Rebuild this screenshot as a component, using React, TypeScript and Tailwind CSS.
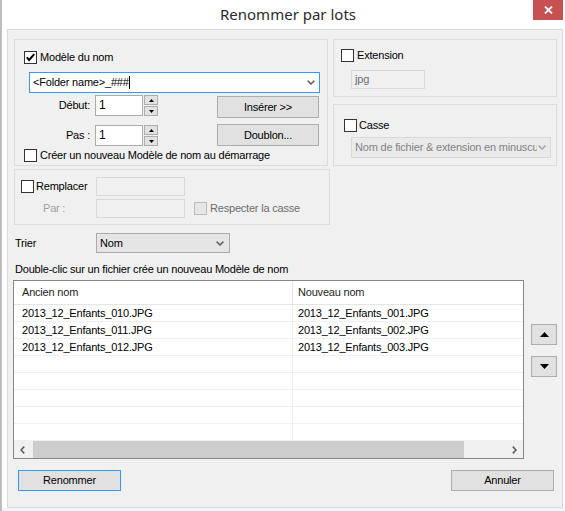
import React from 'react';

function Check({ checked = false, disabled = false }: { checked?: boolean; disabled?: boolean }) {
  return (
    <span
      className={
        disabled
          ? 'w-[13px] h-[13px] shrink-0 border border-[#bcbcbc] bg-[#e6e6e6]'
          : 'w-[13px] h-[13px] shrink-0 border border-[#333333] bg-white flex items-center justify-center'
      }
    >
      {checked && (
        <svg width="11" height="11" viewBox="0 0 11 11">
          <path d="M1.8 5.4 L4.2 8 L9.2 2.2" fill="none" stroke="#000" strokeWidth="2" />
        </svg>
      )}
    </span>
  );
}

function Chevron({ color = '#606060' }: { color?: string }) {
  return (
    <svg width="8" height="5" viewBox="0 0 8 5">
      <path d="M0.6 0.6 L4 4 L7.4 0.6" fill="none" stroke={color} strokeWidth="1.5" />
    </svg>
  );
}

function Spin() {
  return (
    <div className="flex flex-col gap-px ml-px">
      <div className="w-[14px] h-[10px] border border-[#adadad] bg-[#e1e1e1] flex items-center justify-center">
        <svg width="5" height="3" viewBox="0 0 5 3">
          <path d="M0 3 L2.5 0 L5 3 Z" fill="#000" />
        </svg>
      </div>
      <div className="w-[14px] h-[10px] border border-[#adadad] bg-[#e1e1e1] flex items-center justify-center">
        <svg width="5" height="3" viewBox="0 0 5 3">
          <path d="M0 0 L2.5 3 L5 0 Z" fill="#000" />
        </svg>
      </div>
    </div>
  );
}

const rows = [
  ['2013_12_Enfants_010.JPG', '2013_12_Enfants_001.JPG'],
  ['2013_12_Enfants_011.JPG', '2013_12_Enfants_002.JPG'],
  ['2013_12_Enfants_012.JPG', '2013_12_Enfants_003.JPG'],
  ['', ''],
  ['', ''],
  ['', ''],
  ['', ''],
  ['', ''],
];

export default function App() {
  return (
    <div className="relative w-[565px] h-[511px] bg-white border-l-2 border-[#bdbdbd] flex flex-col font-['Liberation_Sans',Arial,sans-serif] text-[11px] tracking-[-0.2px] text-black leading-[13px]">
      {/* title bar */}
      <div className="h-[29px] flex items-center justify-center pl-[9px] font-['Noto_Sans',sans-serif] text-[15px] tracking-normal text-[#2b2b2b]">
        Renommer par lots
      </div>
      <div className="absolute top-0 right-[2px] w-[30px] h-[20px] bg-[#c75050] flex items-center justify-center">
        <svg width="9" height="8" viewBox="0 0 9 8">
          <path d="M1 0.5 L8 7.5 M8 0.5 L1 7.5" stroke="#fff" strokeWidth="1.8" />
        </svg>
      </div>

      {/* client area */}
      <div className="ml-[5px] w-[556px] h-[479px] border border-[#d9d9d9] bg-[#f0f0f0] flex flex-col">
        <div className="mt-[9px] ml-[6px] flex items-start">
          {/* left column */}
          <div className="flex flex-col">
            <div className="w-[314px] h-[127px] border border-[#dcdcdc] flex flex-col">
              <div className="mt-[11px] ml-[9px] flex items-center h-[13px]">
                <Check checked />
                <span className="ml-[3px]">Modèle du nom</span>
              </div>
              <div className="mt-[8px] ml-[14px] w-[291px] h-[21px] border border-[#3399ff] bg-white flex items-center pl-[3px] pr-[4px]">
                <span>&lt;Folder name&gt;_###</span>
                <span className="w-px h-[13px] bg-black" />
                <span className="ml-auto flex">
                  <Chevron />
                </span>
              </div>
              <div className="mt-[2px] flex items-start">
                <span className="w-[75px] text-right h-[21px] leading-[21px]">Début:</span>
                <div className="ml-[5px] w-[48px] h-[21px] border border-[#ababab] bg-white pl-[3px] leading-[19px] text-[12px]">1</div>
                <Spin />
                <div className="ml-auto mr-[8px] mt-px w-[102px] h-[22px] border border-[#adadad] bg-[#e1e1e1] flex items-center justify-center">
                  Insérer &gt;&gt;
                </div>
              </div>
              <div className="mt-[7px] flex items-start">
                <span className="w-[75px] text-right h-[21px] leading-[21px]">Pas :</span>
                <div className="ml-[5px] w-[48px] h-[21px] border border-[#ababab] bg-white pl-[3px] leading-[19px] text-[12px]">1</div>
                <Spin />
                <div className="ml-auto mr-[8px] -mt-px w-[102px] h-[22px] border border-[#adadad] bg-[#e1e1e1] flex items-center justify-center">
                  Doublon...
                </div>
              </div>
              <div className="mt-[3px] ml-[9px] flex items-center h-[13px]">
                <Check />
                <span className="ml-[3px]">Créer un nouveau Modèle de nom au démarrage</span>
              </div>
            </div>

            <div className="mt-[3px] w-[316px] h-[56px] border border-[#dcdcdc] flex flex-col">
              <div className="mt-[7px] flex items-center">
                <div className="w-[81px] pl-[6px] flex items-center">
                  <Check />
                  <span className="ml-[2px]">Remplacer</span>
                </div>
                <div className="w-[89px] h-[19px] border border-[#d9d9d9] bg-[#f0f0f0]" />
              </div>
              <div className="mt-[3px] flex items-center">
                <div className="w-[81px] pl-[28px] text-[#a0a0a0]">Par :</div>
                <div className="w-[89px] h-[19px] border border-[#d9d9d9] bg-[#f0f0f0]" />
                <div className="ml-[9px] flex items-center">
                  <Check disabled />
                  <span className="ml-[3px] text-[#6d6d6d]">Respecter la casse</span>
                </div>
              </div>
            </div>
          </div>

          {/* right column */}
          <div className="ml-[3px] w-[224px] flex flex-col">
            <div className="h-[58px] border border-[#dcdcdc] flex flex-col">
              <div className="mt-[9px] ml-[7px] flex items-center h-[13px]">
                <Check />
                <span className="ml-[3px]">Extension</span>
              </div>
              <div className="mt-[8px] ml-[17px] w-[74px] h-[19px] border border-[#d9d9d9] bg-[#f0f0f0] pl-[3px] leading-[17px] text-[#6d6d6d]">
                jpg
              </div>
            </div>
            <div className="mt-[7px] h-[62px] border border-[#dcdcdc] flex flex-col">
              <div className="mt-[14px] ml-[10px] flex items-center h-[13px]">
                <Check />
                <span className="ml-[2px]">Casse</span>
              </div>
              <div className="mt-[5px] ml-[17px] w-[200px] h-[21px] border border-[#d9d9d9] bg-[#eaeaea] flex items-center pl-[3px] pr-[4px] text-[#838383]">
                <span className="w-[182px] overflow-hidden whitespace-nowrap">Nom de fichier &amp; extension en minuscules</span>
                <span className="ml-auto flex">
                  <Chevron color="#a8a8a8" />
                </span>
              </div>
            </div>
          </div>
        </div>

        {/* Trier */}
        <div className="mt-[8px] pl-[7px] flex items-center h-[20px]">
          <span className="w-[81px]">Trier</span>
          <div className="w-[134px] h-[20px] border border-[#acacac] bg-[#e5e5e5] flex items-center pl-[3px] pr-[5px]">
            <span>Nom</span>
            <span className="ml-auto flex">
              <Chevron />
            </span>
          </div>
        </div>

        <div className="mt-[10px] pl-[7px]">Double-clic sur un fichier crée un nouveau Modèle de nom</div>

        {/* list */}
        <div className="mt-[4px] ml-[5px] flex items-start">
          <div className="w-[511px] h-[179px] border border-[#828790] bg-white flex flex-col">
            <div className="h-[24px] border-b border-[#e5e5e5] flex items-center text-[#1e1e1e]">
              <div className="w-[279px] h-full border-r border-[#e5e5e5] pl-[8px] flex items-center">Ancien nom</div>
              <div className="pl-[5px]">Nouveau nom</div>
            </div>
            {rows.map((r, i) => (
              <div key={i} className="h-[17px] border-b border-[#f0f0f0] flex">
                <div className="w-[279px] h-full border-r border-[#f0f0f0] pl-[8px] flex items-center">{r[0]}</div>
                <div className="pl-[5px] flex items-center">{r[1]}</div>
              </div>
            ))}
            <div className="h-[17px] bg-[#f0f0f0] flex">
              <div className="w-[17px] flex items-center justify-center">
                <svg width="5" height="8" viewBox="0 0 5 8">
                  <path d="M4.2 0.6 L1 4 L4.2 7.4" fill="none" stroke="#606060" strokeWidth="1.6" />
                </svg>
              </div>
              <div className="ml-[2px] w-[431px] bg-[#cdcdcd]" />
              <div className="ml-auto w-[17px] flex items-center justify-center">
                <svg width="5" height="8" viewBox="0 0 5 8">
                  <path d="M0.8 0.6 L4 4 L0.8 7.4" fill="none" stroke="#606060" strokeWidth="1.6" />
                </svg>
              </div>
            </div>
          </div>
          <div className="ml-[7px] pt-[44px] flex flex-col gap-[11px]">
            <div className="w-[26px] h-[21px] border border-[#adadad] bg-[#e1e1e1] flex items-center justify-center">
              <svg width="9" height="5" viewBox="0 0 9 5">
                <path d="M0 5 L4.5 0 L9 5 Z" fill="#000" />
              </svg>
            </div>
            <div className="w-[26px] h-[21px] border border-[#adadad] bg-[#e1e1e1] flex items-center justify-center">
              <svg width="9" height="5" viewBox="0 0 9 5">
                <path d="M0 0 L4.5 5 L9 0 Z" fill="#000" />
              </svg>
            </div>
          </div>
        </div>

        {/* buttons */}
        <div className="mt-[11px] pl-[10px] pr-[8px] flex justify-between">
          <div className="w-[103px] h-[21px] border border-[#3399ff] bg-[#e1e1e1] flex items-center justify-center">Renommer</div>
          <div className="w-[103px] h-[21px] border border-[#adadad] bg-[#e1e1e1] flex items-center justify-center">Annuler</div>
        </div>
      </div>
      <div className="h-[3px] bg-[#eef4fb]" />
    </div>
  );
}
